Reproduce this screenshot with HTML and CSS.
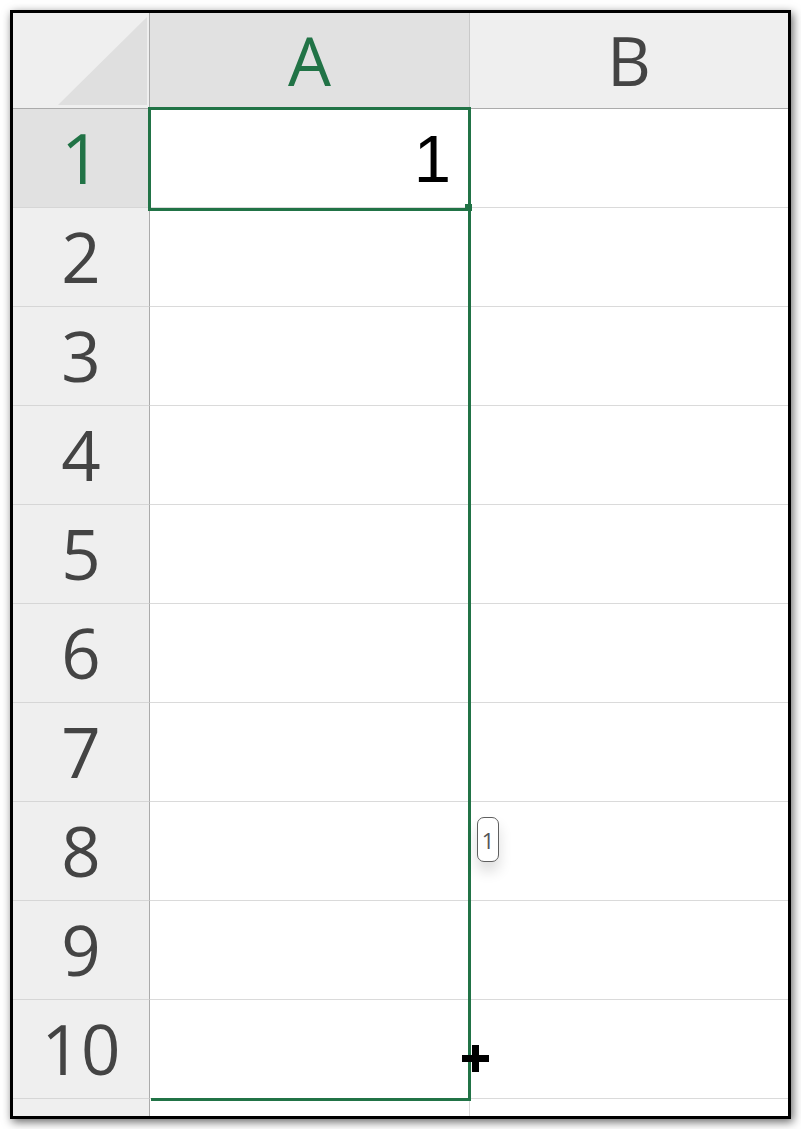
FILE: index.html
```html
<!DOCTYPE html>
<html lang="en">
<head>
<meta charset="utf-8">
<title>Sheet</title>
<link rel="stylesheet" href="styles.css">
</head>
<body>
<div class="frame">
  <div class="sheet">
    <div class="corner">
      <svg class="corner-tri" width="136" height="95" viewBox="0 0 136 95"><polygon points="134,4 134,92 45,92" fill="#dfdfdf"/></svg>
    </div>
    <div class="colhead selected">A</div>
    <div class="colhead last">B</div>

    <div class="rowhead selected">1</div><div class="cell num">1</div><div class="cell last"></div>
    <div class="rowhead">2</div><div class="cell"></div><div class="cell last"></div>
    <div class="rowhead">3</div><div class="cell"></div><div class="cell last"></div>
    <div class="rowhead">4</div><div class="cell"></div><div class="cell last"></div>
    <div class="rowhead">5</div><div class="cell"></div><div class="cell last"></div>
    <div class="rowhead">6</div><div class="cell"></div><div class="cell last"></div>
    <div class="rowhead">7</div><div class="cell"></div><div class="cell last"></div>
    <div class="rowhead">8</div><div class="cell"></div><div class="cell last"></div>
    <div class="rowhead">9</div><div class="cell"></div><div class="cell last"></div>
    <div class="rowhead">10</div><div class="cell"></div><div class="cell last"></div>
    <div class="rowhead end"></div><div class="cell end"></div><div class="cell last end"></div>
  </div>

  <div class="range"></div>
  <div class="active"></div>
  <div class="handle"></div>
  <div class="tip">1</div>
  <div class="cross"></div>
</div>
</body>
</html>
```

FILE: styles.css
```css
html, body {
  margin: 0;
  padding: 0;
  background: #ffffff;
}

body {
  padding: 10px;
}

.frame {
  position: relative;
  width: 775px;
  height: 1103px;
  border: 3px solid #000;
  box-shadow: 2px 3px 9px rgba(0, 0, 0, 0.6);
  overflow: hidden;
  background: #fff;
}

.sheet {
  display: grid;
  grid-template-columns: 137px 320px 1fr;
  grid-template-rows: 96px repeat(10, 99px) 1fr;
  width: 100%;
  height: 100%;
  font-family: "Open Sans", "Noto Sans", sans-serif;
}

.corner {
  position: relative;
  background: #efefef;
  border-right: 1px solid #ababab;
  border-bottom: 1px solid #ababab;
  box-sizing: border-box;
}

.corner-tri {
  display: block;
}

.colhead {
  display: flex;
  align-items: center;
  justify-content: center;
  background: #efefef;
  color: #444444;
  font-size: 68px;
  line-height: 1;
  border-right: 1px solid #c9c9c9;
  border-bottom: 1px solid #ababab;
  box-sizing: border-box;
  padding-bottom: 2px;
}

.colhead.last {
  border-right: none;
}

.colhead.selected {
  background: #e1e1e1;
  color: #217346;
}

.rowhead {
  display: flex;
  align-items: center;
  justify-content: center;
  background: #efefef;
  color: #444444;
  font-size: 69px;
  line-height: 1;
  border-right: 1px solid #ababab;
  border-bottom: 1px solid #d6d6d6;
  box-sizing: border-box;
  padding-bottom: 2px;
}

.rowhead.selected {
  background: #e1e1e1;
  color: #217346;
}

.rowhead.end,
.cell.end {
  border-bottom: none;
}

.cell {
  background: #ffffff;
  border-right: 1px solid #dadada;
  border-bottom: 1px solid #dadada;
  box-sizing: border-box;
}

.cell.last {
  border-right: none;
}

.cell.num {
  display: flex;
  align-items: center;
  justify-content: flex-end;
  padding-right: 18px;
  font-family: "Liberation Sans", Arial, sans-serif;
  font-size: 67px;
  line-height: 1;
  color: #000;
}

.active {
  position: absolute;
  left: 135px;
  top: 94px;
  width: 323px;
  height: 104px;
  border: 3px solid #217346;
  box-sizing: border-box;
}

.range {
  position: absolute;
  left: 138px;
  top: 94px;
  width: 320px;
  height: 994px;
  border-right: 3px solid #217346;
  border-bottom: 3px solid #217346;
  box-sizing: border-box;
}

.handle {
  position: absolute;
  left: 452px;
  top: 191px;
  width: 7px;
  height: 7px;
  background: #217346;
}

.tip {
  position: absolute;
  left: 464px;
  top: 804px;
  width: 22px;
  height: 45px;
  box-sizing: border-box;
  border: 1.5px solid #5f5f5f;
  border-radius: 7px;
  background: #fff;
  box-shadow: 0 9px 14px rgba(0, 0, 0, 0.14);
  display: flex;
  align-items: center;
  justify-content: center;
  font-family: "Open Sans", "Noto Sans", sans-serif;
  font-size: 22px;
  line-height: 1;
  color: #555;
}

.cross {
  position: absolute;
  left: 449px;
  top: 1032px;
  width: 27px;
  height: 27px;
}

.cross::before,
.cross::after {
  content: "";
  position: absolute;
  background: #000;
}

.cross::before {
  left: 0;
  top: 10px;
  width: 27px;
  height: 7px;
}

.cross::after {
  left: 10px;
  top: 0;
  width: 7px;
  height: 27px;
}
```
